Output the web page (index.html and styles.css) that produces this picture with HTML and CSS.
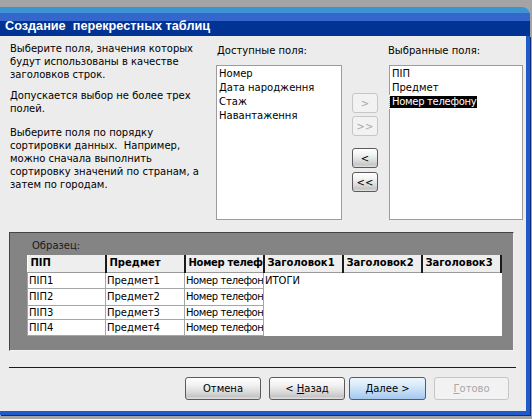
FILE: index.html
```html
<!DOCTYPE html>
<html>
<head>
<meta charset="utf-8">
<link rel="stylesheet" href="styles.css">
</head>
<body>
<div class="window">
  <div class="titlebar"><span class="title">Создание&nbsp; перекрестных таблиц</span></div>
  <div class="content">
    <div class="top">
      <div class="desc">
        <p class="p1">Выберите поля, значения которых<br>будут использованы в качестве<br>заголовков строк.</p>
        <p class="p2">Допускается выбор не более трех<br>полей.</p>
        <p class="p3">Выберите поля по порядку<br>сортировки данных.&nbsp; Например,<br>можно сначала выполнить<br>сортировку значений по странам, а<br>затем по городам.</p>
      </div>
      <div class="col avail">
        <div class="label">Доступные поля:</div>
        <div class="list">
          <div class="item">Номер</div>
          <div class="item">Дата народження</div>
          <div class="item">Стаж</div>
          <div class="item">Навантаження</div>
        </div>
      </div>
      <div class="movebtns">
        <div class="btn small disabled b1">&gt;</div>
        <div class="btn small disabled b2">&gt;&gt;</div>
        <div class="btn small b3">&lt;</div>
        <div class="btn small b4">&lt;&lt;</div>
      </div>
      <div class="col sel">
        <div class="label lbl-sel">Выбранные поля:</div>
        <div class="list list-sel">
          <div class="item">ПІП</div>
          <div class="item">Предмет</div>
          <div class="item"><span class="hl">Номер телефону</span></div>
        </div>
      </div>
    </div>

    <div class="sample">
      <div class="sample-label">Образец:</div>
      <table class="grid">
        <colgroup>
          <col class="c1"><col class="c2"><col class="c3"><col class="c4"><col class="c5"><col class="c6">
        </colgroup>
        <thead>
          <tr><th>ПІП</th><th>Предмет</th><th class="tight">Номер телеф</th><th>Заголовок1</th><th>Заголовок2</th><th>Заголовок3</th></tr>
        </thead>
        <tbody>
          <tr class="r1"><td>ПІП1</td><td>Предмет1</td><td class="tight">Номер телефон</td><td class="blank">ИТОГИ</td><td class="blank"></td><td class="blank"></td></tr>
          <tr class="r2"><td>ПІП2</td><td>Предмет2</td><td class="tight">Номер телефон</td><td class="blank"></td><td class="blank"></td><td class="blank"></td></tr>
          <tr class="r3"><td>ПІП3</td><td>Предмет3</td><td class="tight">Номер телефон</td><td class="blank"></td><td class="blank"></td><td class="blank"></td></tr>
          <tr class="r4"><td>ПІП4</td><td>Предмет4</td><td class="tight">Номер телефон</td><td class="blank"></td><td class="blank"></td><td class="blank"></td></tr>
        </tbody>
      </table>
    </div>

    <div class="sep"></div>

    <div class="buttons">
      <div class="btn wide cancel">Отмена</div>
      <div class="btn wide back">&lt;&nbsp;<u>Н</u>азад</div>
      <div class="btn wide next default"><u>Д</u>алее &gt;</div>
      <div class="btn wide finish disabled"><u>Г</u>отово</div>
    </div>
  </div>
</div>
</body>
</html>
```

FILE: styles.css
```css
html, body {
  margin: 0;
  padding: 0;
}
body {
  width: 532px;
  height: 419px;
  background: #a4a4a4;
  overflow: hidden;
  font-family: "DejaVu Sans", sans-serif;
  font-size: 10px;
  color: #000;
}
.window {
  margin-top: 7px;
  width: 530px;
  display: flex;
  flex-direction: column;
}
.titlebar {
  height: 29px;
  box-sizing: border-box;
  border-top-right-radius: 8px;
  background: linear-gradient(to bottom,
    #3d94d4 0px, #3d94d4 6px,
    #3466cc 6px, #3466cc 14px,
    #003394 14px, #003394 28px,
    #0c3668 28px, #0c3668 29px);
  padding: 11px 0 0 5px;
}
.title {
  font-family: "Liberation Sans", Arial, sans-serif;
  font-weight: bold;
  font-size: 12.7px;
  line-height: 16px;
  color: #fff;
  display: block;
}
.content {
  height: 375px;
  box-sizing: content-box;
  background: #ececec;
  border-right: 4px solid #2059c9;
  border-bottom: 4px solid #2059c9;
  box-shadow: 1px 1px 0 #0b2d7e;
  display: flex;
  flex-direction: column;
}
.top {
  display: flex;
  padding-top: 6px;
  height: 178px;
}
.desc {
  width: 200px;
  margin-left: 10px;
  line-height: 13px;
}
.desc p {
  margin: 0;
}
.p2 { margin-top: 8px !important; }
.p3 { margin-top: 11px !important; }
.col {
  display: flex;
  flex-direction: column;
}
.avail {
  margin-left: 6px;
  width: 126px;
}
.sel {
  margin-left: 11px;
  width: 134px;
}
.label {
  height: 23px;
  box-sizing: border-box;
  padding: 2px 0 0 1px;
  line-height: 13px;
}
.lbl-sel {
  padding-left: 0;
  margin-left: -1px;
}
.list {
  height: 155px;
  box-sizing: border-box;
  background: #fff;
  border: 1px solid #9c9c9c;
  padding: 1px 0 0 2px;
}
.list-sel {
  padding-left: 0;
}
.item {
  height: 14px;
  line-height: 14px;
  white-space: nowrap;
}
.list-sel .item {
  padding-left: 2px;
}
.hl {
  display: inline-block;
  background: #000;
  color: #fff;
  margin-left: -2px;
  padding: 0 1px 0 2px;
  height: 12px;
  line-height: 12px;
  margin-top: 1px;
  letter-spacing: -0.3px;
  outline: 1px dotted #ffe;
}
.movebtns {
  margin-left: 10px;
  width: 26px;
  padding-top: 51px;
  display: flex;
  flex-direction: column;
}
.btn {
  box-sizing: border-box;
  border: 1px solid #5b5b5b;
  border-radius: 3px;
  background: linear-gradient(to bottom, #ffffff 0%, #f4f4f4 30%, #dcdcdc 65%, #c6c6c6 88%, #e2e2e2 100%);
  display: flex;
  align-items: center;
  justify-content: center;
  white-space: nowrap;
}
.btn.small {
  width: 26px;
  height: 20px;
}
.b2 { margin-top: 3px; }
.b3 { margin-top: 12px; }
.b4 { margin-top: 4px; }
.btn.disabled {
  border-color: #c6c6c6;
  background: #f2f2f2;
  color: #a8a8a8;
}
.sample {
  margin: 12px 0 0 9px;
  width: 505px;
  height: 119px;
  box-sizing: border-box;
  background: #848484;
  border-top: 1px solid #444;
  border-left: 1px solid #444;
  border-right: 1px solid #f4f4f4;
  border-bottom: 1px solid #f4f4f4;
  padding: 6px 0 0 17px;
}
.sample-label {
  margin-left: 5px;
  line-height: 13px;
  color: #1a1a1a;
}
.grid {
  margin-top: 3px;
  border-collapse: collapse;
  table-layout: fixed;
  width: 473px;
  background: #fff;
}
.grid col { width: 79px; }
.grid col.c1 { width: 78px; }
.grid th {
  height: 17px;
  box-sizing: border-box;
  padding: 0 0 0 3px;
  background: #eeeeee;
  font-weight: bold;
  text-align: left;
  white-space: nowrap;
  overflow: hidden;
  border-right: 2px solid #1a1a1a;
  border-bottom: 1px solid #9a9a9a;
  line-height: 16px;
}
.grid td {
  padding: 0 0 0 1px;
  white-space: nowrap;
  overflow: hidden;
  border: 1px solid #a6a6a6;
  line-height: 13px;
}
.grid .tight {
  letter-spacing: -0.4px;
}
.grid th.tight {
  letter-spacing: -0.3px;
}
.grid td.blank {
  border: none;
}
.r1 td { height: 15px; }
.r2 td { height: 16px; }
.r3 td { height: 13px; }
.r4 td { height: 15px; }
.sep {
  margin: 16px 0 0 9px;
  width: 507px;
  height: 1px;
  background: #1c1c1c;
}
.buttons {
  display: flex;
  margin: 9px 0 0 185px;
}
.btn.wide {
  height: 23px;
  width: 76px;
}
.back { margin-left: 8px; }
.next { margin-left: 4px; width: 77px !important; }
.finish { margin-left: 8px; width: 75px !important; }
.btn.default {
  border-color: #3d5f94;
  background: linear-gradient(to bottom, #eef6fd 0%, #d9eafa 35%, #b8d6f4 75%, #a4c8ee 100%);
}
.btn u {
  text-decoration: underline;
}
```
